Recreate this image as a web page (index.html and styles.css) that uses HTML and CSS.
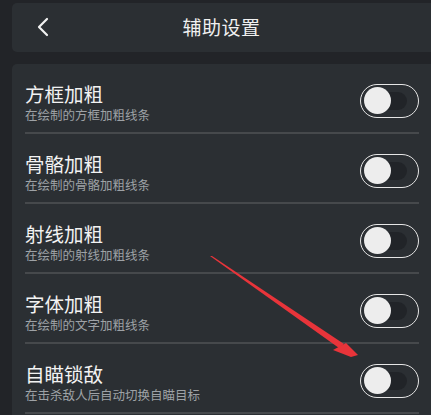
FILE: index.html
```html
<!DOCTYPE html>
<html lang="zh">
<head>
<meta charset="utf-8">
<link rel="stylesheet" href="styles.css">
</head>
<body>
<div class="page">
  <header class="topbar">
    <svg class="back" width="14" height="20" viewBox="0 0 14 20"><path d="M11 2 L3 10 L11 18" fill="none" stroke="#f2f2f2" stroke-width="2.2" stroke-linecap="round" stroke-linejoin="round"/></svg>
    <div class="title">辅助设置</div>
  </header>
  <section class="card">
    <div class="row">
      <div class="text"><div class="name">方框加粗</div><div class="desc">在绘制的方框加粗线条</div></div>
      <div class="toggle"><span class="track"></span><span class="knob"></span></div>
    </div>
    <div class="row">
      <div class="text"><div class="name">骨骼加粗</div><div class="desc">在绘制的骨骼加粗线条</div></div>
      <div class="toggle"><span class="track"></span><span class="knob"></span></div>
    </div>
    <div class="row">
      <div class="text"><div class="name">射线加粗</div><div class="desc">在绘制的射线加粗线条</div></div>
      <div class="toggle"><span class="track"></span><span class="knob"></span></div>
    </div>
    <div class="row">
      <div class="text"><div class="name">字体加粗</div><div class="desc">在绘制的文字加粗线条</div></div>
      <div class="toggle"><span class="track"></span><span class="knob"></span></div>
    </div>
    <div class="row">
      <div class="text"><div class="name">自瞄锁敌</div><div class="desc">在击杀敌人后自动切换自瞄目标</div></div>
      <div class="toggle"><span class="track"></span><span class="knob"></span></div>
    </div>
  </section>
  <svg class="arrow" width="431" height="415" viewBox="0 0 431 415">
    <polygon points="210,256 212,256 344,344 339,348" fill="#e8343a"/>
    <polygon points="333,350 346,343 358,355 351,357" fill="#e8343a"/>
  </svg>
</div>
</body>
</html>
```
FILE: styles.css
```css
html, body {
  margin: 0;
  padding: 0;
  background: #222428;
  font-family: "Liberation Sans", "Noto Sans CJK SC", sans-serif;
  overflow: hidden;
}
.page {
  position: relative;
  width: 431px;
  height: 415px;
  padding: 3px 0 0 12px;
  box-sizing: border-box;
  overflow: hidden;
}
.topbar {
  position: relative;
  height: 49px;
  background: #2b2f33;
  border-radius: 5px 0 0 5px;
  display: flex;
  align-items: center;
  justify-content: center;
}
.back {
  position: absolute;
  left: 24px;
  top: 14px;
}
.title {
  color: #f0f0f0;
  font-size: 19px;
  line-height: 24px;
  letter-spacing: 0.5px;
  padding-top: 2px;
}
.card {
  margin-top: 12px;
  background: #2b2f33;
  border-radius: 5px 0 0 5px;
  padding: 0 12px 0 13px;
  height: 400px;
}
.row {
  height: 68px;
  border-bottom: 2px solid #46494c;
  display: flex;
  align-items: flex-start;
  justify-content: space-between;
}
.text {
  padding-top: 19px;
}
.name {
  color: #f2f2f2;
  font-size: 19.5px;
  line-height: 24.5px;
}
.desc {
  color: #9ea2a6;
  font-size: 12.5px;
  line-height: 16px;
}
.toggle {
  position: relative;
  width: 57px;
  height: 32px;
  border: 1.5px solid #e6e6e6;
  border-radius: 17px;
  margin-top: 19.5px;
}
.track {
  position: absolute;
  left: 9px;
  top: 7px;
  width: 37px;
  height: 18px;
  border-radius: 9px;
  background: #212428;
}
.knob {
  position: absolute;
  left: 3px;
  top: 2.5px;
  width: 27px;
  height: 27px;
  border-radius: 50%;
  background: #ededed;
}
.arrow {
  position: absolute;
  left: 0;
  top: 0;
  pointer-events: none;
}
```
